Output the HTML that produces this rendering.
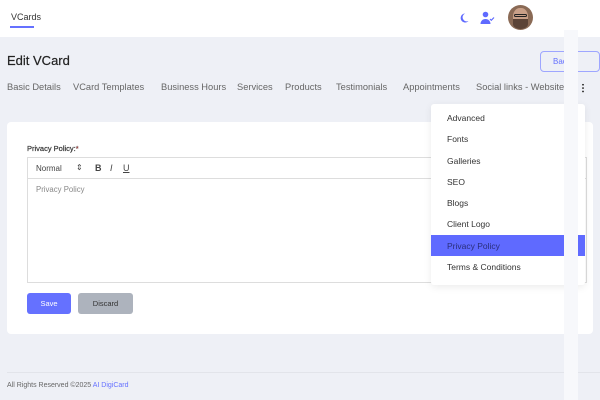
<!DOCTYPE html>
<html><head><meta charset="utf-8"><style>
*{margin:0;padding:0;box-sizing:border-box}
body{width:600px;height:400px;overflow:hidden;background:#eef0f6;font-family:"Liberation Sans",sans-serif;position:relative;color:#333}
.abs{position:absolute}
.tab{position:absolute;top:82px;font-size:9.3px;color:#666;white-space:nowrap}
</style></head><body>
<div class="abs" style="left:0;top:0;width:600px;height:37px;background:#fff"></div>
<div class="abs" style="left:11px;top:12px;font-size:9px;color:#333">VCards</div>
<div class="abs" style="left:10px;top:26px;width:24px;height:1.5px;background:#6571ff"></div>
<svg class="abs" style="left:458px;top:12px" width="12" height="12" viewBox="0 0 12 12"><path d="M7 1.5A4.5 4.5 0 1 0 10.5 9 4 4 0 0 1 7 1.5z" fill="#5f6aff"/></svg>
<svg class="abs" style="left:480px;top:11px" width="15" height="14" viewBox="0 0 15 14"><circle cx="5.5" cy="3.5" r="2.8" fill="#5f6aff"/><path d="M0.5 13c0-3 2.2-5 5-5s5 2 5 5z" fill="#5f6aff"/><path d="M10 8l1.3 1.3L14 6.5" stroke="#5f6aff" stroke-width="1.2" fill="none"/></svg>
<div class="abs" style="left:508px;top:5px;width:25px;height:25px;border-radius:50%;background:#8a6a55;overflow:hidden">
<div class="abs" style="left:5px;top:3px;width:15px;height:19px;border-radius:45%;background:#c9a088"></div>
<div class="abs" style="left:5px;top:14px;width:15px;height:10px;border-radius:0 0 50% 50%;background:#5b4336"></div>
<div class="abs" style="left:6px;top:9px;width:13px;height:3px;border:1px solid #222;border-radius:2px"></div>
</div>
<div class="abs" style="left:7px;top:53px;font-size:13px;color:#222;-webkit-text-stroke:0.2px #222">Edit VCard</div>
<div class="abs" style="left:540px;top:51px;width:60px;height:21px;border:1px solid #9ea6ff;border-radius:4px;background:#eef0f6"></div>
<div class="abs" style="left:553px;top:57px;font-size:8px;color:#6571ff">Back</div>
<span class="tab" style="left:7px">Basic Details</span>
<span class="tab" style="left:73px">VCard Templates</span>
<span class="tab" style="left:161px">Business Hours</span>
<span class="tab" style="left:237px">Services</span>
<span class="tab" style="left:285px">Products</span>
<span class="tab" style="left:336px">Testimonials</span>
<span class="tab" style="left:403px">Appointments</span>
<span class="tab" style="left:476px">Social links - Website</span>
<div class="abs" style="left:582px;top:83px;width:2px;height:10px;background:radial-gradient(circle,#444 0.9px,transparent 1px) 0 0/2px 3.4px"></div>
<div class="abs" style="left:7px;top:122px;width:586px;height:212px;background:#fff;border-radius:4px"></div>
<div class="abs" style="left:27px;top:144px;font-size:7.5px;color:#333;-webkit-text-stroke:0.2px #333">Privacy Policy:<span style="color:#e33">*</span></div>
<div class="abs" style="left:27px;top:157px;width:560px;height:126px;border:1px solid #ddd"></div>
<div class="abs" style="left:27px;top:178px;width:560px;height:1px;background:#ddd"></div>
<div class="abs" style="left:36px;top:164px;font-size:8px;color:#444">Normal</div>
<div class="abs" style="left:76px;top:163px;font-size:8px;color:#444">⇕</div>
<div class="abs" style="left:95px;top:163px;font-size:9px;color:#444;font-weight:bold">B</div>
<div class="abs" style="left:110px;top:163px;font-size:9px;color:#444;font-style:italic">I</div>
<div class="abs" style="left:123px;top:163px;font-size:9px;color:#444;text-decoration:underline">U</div>
<div class="abs" style="left:36px;top:185px;font-size:7.8px;color:#888">Privacy Policy</div>
<div class="abs" style="left:27px;top:293px;width:44px;height:21px;background:#6571ff;border-radius:3px;color:#fff;font-size:7.5px;text-align:center;line-height:21px">Save</div>
<div class="abs" style="left:78px;top:293px;width:55px;height:21px;background:#adb3bd;border-radius:3px;color:#333;font-size:7.5px;text-align:center;line-height:21px">Discard</div>
<div class="abs" style="left:7px;top:372px;width:593px;height:1px;background:#e2e4ea"></div>
<div class="abs" style="left:7px;top:382px;font-size:7px;color:#666">All Rights Reserved ©2025 <span style="color:#6571ff">AI DigiCard</span></div>
<div class="abs" style="left:431px;top:104px;width:154px;height:181px;background:#fff;box-shadow:0 2px 8px rgba(0,0,0,.08);border-radius:3px"></div>
<div class="abs" style="left:431px;top:235px;width:154px;height:21px;background:#5f6aff"></div>
<div class="abs" style="left:447px;top:104px;font-size:8.5px;color:#333;line-height:21.3px">
<div style="height:21.3px;margin-top:4px">Advanced</div><div style="height:21.3px">Fonts</div><div style="height:21.3px">Galleries</div><div style="height:21.3px">SEO</div><div style="height:21.3px">Blogs</div><div style="height:21.3px">Client Logo</div><div style="height:21.3px;color:#2a2f7a">Privacy Policy</div><div style="height:21.3px">Terms &amp; Conditions</div></div>
<div class="abs" style="left:564px;top:30px;width:14px;height:370px;background:#f7f8fb"></div>
</body></html>
